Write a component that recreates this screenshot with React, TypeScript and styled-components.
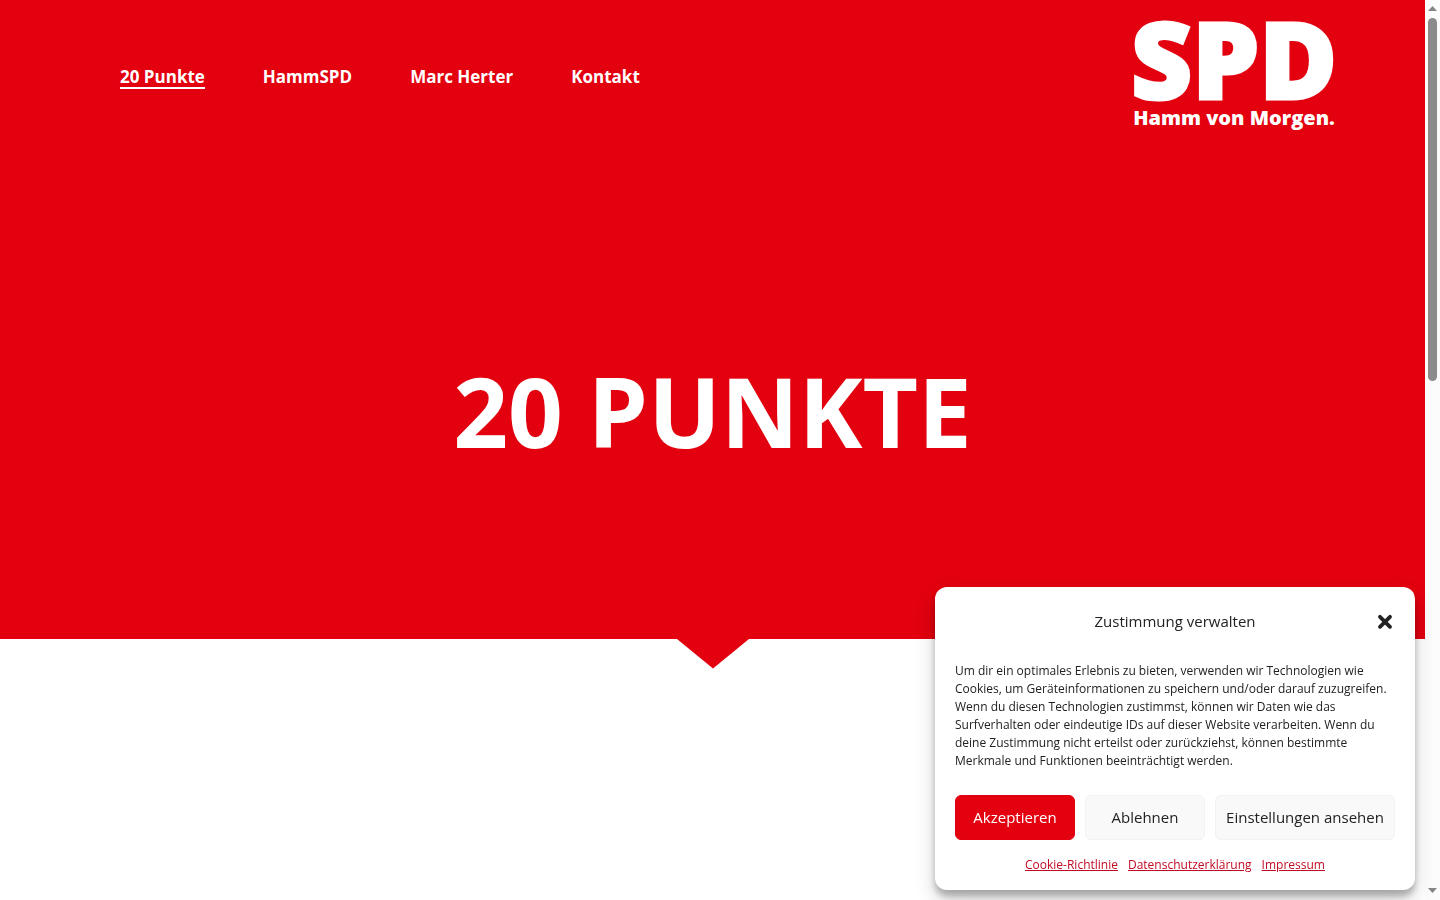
import React, { useState } from "react";
import styled, { createGlobalStyle } from "styled-components";

const red = "#e3000f";

const GlobalStyle = createGlobalStyle`
  *, *::before, *::after { box-sizing: border-box; }
  body {
    margin: 0;
    background: #fff;
    color: #222;
    font-family: "Open Sans", "Noto Sans", sans-serif;
  }
`;

const Shell = styled.div`
  display: flex;
  min-height: 100vh;
`;

const Page = styled.div`
  flex: 1;
  min-width: 0;
`;

const Hero = styled.div`
  display: flex;
  flex-direction: column;
  min-height: 71vh;
  background: ${red};
  color: #fff;
`;

const Header = styled.header`
  display: flex;
  justify-content: space-between;
  align-items: center;
  height: 153px;
  padding: 0 90px 0 120px;
`;

const Nav = styled.nav`
  display: flex;
  gap: 58px;
`;

const NavLink = styled.a<{ $active?: boolean }>`
  padding-top: 2px;
  border-bottom: 2px solid ${(p) => (p.$active ? "#fff" : "transparent")};
  color: #fff;
  font-size: 17px;
  font-weight: 700;
  line-height: 20px;
  text-decoration: none;
`;

const Logo = styled.a`
  display: flex;
  flex-direction: column;
  align-items: center;
  width: 202px;
  color: #fff;
  font-weight: 800;
  text-decoration: none;
  white-space: nowrap;
`;

const LogoName = styled.span`
  font-size: 106px;
  line-height: 82px;
  -webkit-text-stroke: 3px #fff;
`;

const LogoClaim = styled.span`
  font-size: 20px;
  line-height: 38px;
`;

const Title = styled.h1`
  margin: 0;
  padding: 191px 20px 0;
  font-size: 96px;
  font-weight: 700;
  line-height: 134px;
  text-align: center;
  text-transform: uppercase;
`;

const Pointer = styled.svg`
  display: block;
  width: 72px;
  height: 30px;
  margin: 0 auto;
  fill: ${red};
`;

const ScrollTrack = styled.div`
  position: sticky;
  top: 0;
  display: flex;
  flex-direction: column;
  align-items: center;
  justify-content: space-between;
  width: 15px;
  height: 100vh;
  padding: 6px 0 7px;
  background: #fcfcfc;
`;

const ScrollThumb = styled.div`
  width: 9px;
  height: 363px;
  margin: 7px 0 auto;
  border-radius: 5px;
  background: #8b8b8b;
`;

const ScrollArrow = styled.svg`
  width: 9px;
  height: 5px;
  fill: #858585;
`;

const Consent = styled.section`
  position: fixed;
  right: 25px;
  bottom: 10px;
  display: flex;
  flex-direction: column;
  width: 480px;
  max-width: 100%;
  padding: 20px 20px 16px;
  border-radius: 12px;
  background: #fff;
  box-shadow: rgba(0, 0, 0, 0.19) 0 10px 20px, rgba(0, 0, 0, 0.23) 0 6px 6px;
`;

const ConsentHeader = styled.div`
  display: grid;
  grid-template-columns: 20px 1fr 20px;
  align-items: center;
  height: 28px;
`;

const ConsentTitle = styled.h2`
  grid-column: 2;
  margin: 0;
  font-size: 15px;
  font-weight: 400;
  line-height: 20px;
  text-align: center;
`;

const CloseButton = styled.button`
  display: flex;
  padding: 0;
  border: 0;
  background: none;
  color: #222;
  cursor: pointer;
`;

const ConsentText = styled.p`
  margin: 27px 0 25px;
  font-size: 12px;
  line-height: 18px;
`;

const ButtonRow = styled.div`
  display: flex;
  gap: 10px;
`;

const ConsentButton = styled.button<{ $primary?: boolean }>`
  flex: 1 1 auto;
  min-width: 120px;
  height: 45px;
  padding: 0 10px 2px;
  border: 1px solid ${(p) => (p.$primary ? red : "#f2f2f2")};
  border-radius: 6px;
  background: ${(p) => (p.$primary ? red : "#f9f9f9")};
  color: ${(p) => (p.$primary ? "#fff" : "#222")};
  font-family: inherit;
  font-size: 15px;
  white-space: nowrap;
  cursor: pointer;
`;

const LinkRow = styled.div`
  display: flex;
  justify-content: center;
  gap: 10px;
  margin-top: 16px;
`;

const DocLink = styled.a`
  color: #c10a24;
  font-size: 12px;
  line-height: 18px;
  text-decoration: underline;
`;

const navItems = ["20 Punkte", "HammSPD", "Marc Herter", "Kontakt"];
const documents = ["Cookie-Richtlinie", "Datenschutzerklärung", "Impressum"];

function ConsentDialog({ onClose }: { onClose: () => void }) {
  return (
    <Consent role="dialog" aria-labelledby="consent-title">
      <ConsentHeader>
        <ConsentTitle id="consent-title">Zustimmung verwalten</ConsentTitle>
        <CloseButton type="button" aria-label="Dialog schließen" onClick={onClose}>
          <svg width="20" height="20" viewBox="0 0 20 20" aria-hidden="true">
            <path d="M5 5.800 15 15.800M15 5.800 5 15.800" fill="none" stroke="currentColor" strokeWidth="3.800" strokeLinecap="round" />
          </svg>
        </CloseButton>
      </ConsentHeader>
      <ConsentText>
        Um dir ein optimales Erlebnis zu bieten, verwenden wir Technologien wie Cookies, um
        Geräteinformationen zu speichern und/oder darauf zuzugreifen. Wenn du diesen Technologien
        zustimmst, können wir Daten wie das Surfverhalten oder eindeutige IDs auf dieser Website
        verarbeiten. Wenn du deine Zustimmung nicht erteilst oder zurückziehst, können bestimmte
        Merkmale und Funktionen beeinträchtigt werden.
      </ConsentText>
      <ButtonRow>
        <ConsentButton type="button" $primary onClick={onClose}>Akzeptieren</ConsentButton>
        <ConsentButton type="button" onClick={onClose}>Ablehnen</ConsentButton>
        <ConsentButton type="button">Einstellungen ansehen</ConsentButton>
      </ButtonRow>
      <LinkRow>
        {documents.map((name) => (
          <DocLink key={name} href="#">{name}</DocLink>
        ))}
      </LinkRow>
    </Consent>
  );
}

export default function App() {
  const [consentOpen, setConsentOpen] = useState(true);
  return (
    <>
      <GlobalStyle />
      <Shell>
        <Page>
          <Hero>
            <Header>
              <Nav aria-label="Hauptmenü">
                {navItems.map((name, i) => (
                  <NavLink key={name} href="#" $active={i === 0}>{name}</NavLink>
                ))}
              </Nav>
              <Logo href="#">
                <LogoName>SPD</LogoName>
                <LogoClaim>Hamm von Morgen.</LogoClaim>
              </Logo>
            </Header>
            <Title>20 Punkte</Title>
          </Hero>
          <Pointer viewBox="0 0 72 30" aria-hidden="true">
            <path d="M0 0H72L36 29.500Z" />
          </Pointer>
        </Page>
        <ScrollTrack aria-hidden="true">
          <ScrollArrow viewBox="0 0 9 5"><path d="M0 5 4.500 0 9 5Z" /></ScrollArrow>
          <ScrollThumb />
          <ScrollArrow viewBox="0 0 9 5"><path d="M0 0H9L4.500 5Z" /></ScrollArrow>
        </ScrollTrack>
      </Shell>
      {consentOpen && <ConsentDialog onClose={() => setConsentOpen(false)} />}
    </>
  );
}
